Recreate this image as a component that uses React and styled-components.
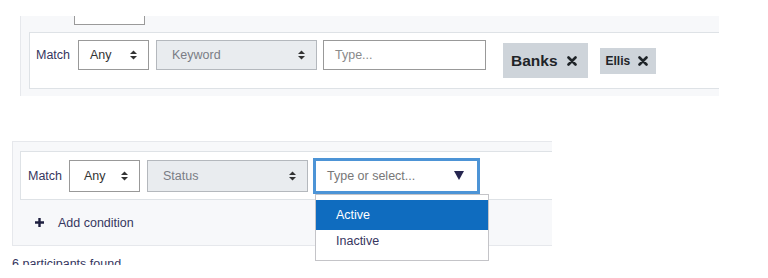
import React from 'react';
import styled, { createGlobalStyle } from 'styled-components';

const GlobalStyle = createGlobalStyle`
    body {
        margin: 0;
        background: #fff;
        font-family: 'Liberation Sans', Arial, sans-serif;
        font-size: 12.5px;
        color: #363660;
    }
`;

const Page = styled.div`
    height: 265px;
    padding-top: 16px;
    box-sizing: border-box;
    overflow: hidden;
`;

const Panel = styled.div`
    margin-left: ${(p) => p.$left}px;
    width: ${(p) => p.$width}px;
    margin-top: ${(p) => p.$top || 0}px;
    padding: ${(p) => p.$padding};
    background: #f7f8fa;
    border-left: 1px solid #e6e8ec;
    border-top: ${(p) => (p.$bordered ? '1px solid #e6e8ec' : 'none')};
    border-bottom: ${(p) => (p.$bordered ? '1px solid #e6e8ec' : 'none')};
    box-sizing: border-box;
    overflow: ${(p) => (p.$clip ? 'hidden' : 'visible')};
`;

const Stub = styled.div`
    margin-left: 45px;
    width: 71px;
    height: 9px;
    background: #fff;
    border: 1px solid #9a9a9a;
    border-top: none;
    box-sizing: border-box;
`;

const ConditionRow = styled.div`
    display: flex;
    align-items: ${(p) => p.$align};
    height: ${(p) => p.$height}px;
    margin-top: ${(p) => p.$top || 0}px;
    padding: ${(p) => p.$padding};
    background: #fff;
    border: 1px solid #dee2e6;
    border-right: none;
    box-sizing: border-box;
    white-space: nowrap;
`;

const Label = styled.span`
    width: ${(p) => p.$width}px;
    line-height: 30px;
    flex-shrink: 0;
`;

const Select = styled.div`
    display: flex;
    align-items: center;
    justify-content: space-between;
    width: ${(p) => p.$width}px;
    height: ${(p) => p.$height}px;
    margin-right: ${(p) => p.$gap}px;
    padding: 0 11px 0 ${(p) => p.$pad}px;
    background: ${(p) => (p.$disabled ? '#e9ecef' : '#fff')};
    color: ${(p) => (p.$disabled ? '#7a7d85' : '#333')};
    border: 1px solid ${(p) => (p.$disabled ? '#b4b8bd' : '#999')};
    box-sizing: border-box;
    flex-shrink: 0;
`;

const TextInput = styled.div`
    display: flex;
    align-items: center;
    width: 163px;
    height: 30px;
    margin-right: 17px;
    padding-left: 11px;
    color: #8a8a8a;
    border: 1px solid #999;
    box-sizing: border-box;
    flex-shrink: 0;
`;

const Tag = styled.span`
    display: inline-flex;
    align-items: center;
    gap: ${(p) => p.$gap}px;
    height: ${(p) => p.$height}px;
    margin-top: ${(p) => p.$top}px;
    margin-right: 12px;
    padding: 0 ${(p) => p.$right}px 0 ${(p) => p.$left}px;
    background: #ced4da;
    color: #1f2428;
    font-weight: bold;
    font-size: ${(p) => p.$size}px;
    box-sizing: border-box;
    flex-shrink: 0;
`;

const Autocomplete = styled.div`
    position: relative;
    flex-shrink: 0;
`;

const FocusBox = styled.div`
    display: flex;
    align-items: center;
    justify-content: space-between;
    width: 167px;
    height: 36px;
    padding: 0 13px 0 11px;
    color: #777;
    background: #fff;
    border: 3px solid #4d94d6;
    box-sizing: border-box;
`;

const Menu = styled.ul`
    position: absolute;
    top: 100%;
    left: 2px;
    width: 174px;
    height: 67px;
    margin: 0;
    padding: 5px 0 0;
    list-style: none;
    background: #fff;
    border: 1px solid #c4c4c8;
    box-sizing: border-box;
    z-index: 2;
`;

const MenuItem = styled.li`
    height: 30px;
    line-height: ${(p) => (p.$active ? 30 : 22)}px;
    padding-left: 20px;
    background: ${(p) => (p.$active ? '#0f6cbf' : 'transparent')};
    color: ${(p) => (p.$active ? '#fff' : '#363660')};
`;

const AddRow = styled.div`
    display: flex;
    align-items: center;
    gap: 14px;
    height: 45px;
    padding-left: 15px;
`;

const Count = styled.div`
    margin-top: 8px;
    padding-left: 12px;
    line-height: 20px;
`;

const SortIcon = () => (
    <svg width="7" height="10" viewBox="0 0 7 10">
        <polygon points="0,4 3.5,0.5 7,4" fill="#333" />
        <polygon points="0,6 3.5,9.5 7,6" fill="#333" />
    </svg>
);

const CaretDown = () => (
    <svg width="10" height="9" viewBox="0 0 10 9">
        <polygon points="0,0 10,0 5,9" fill="#262650" />
    </svg>
);

const CloseIcon = ({ size }) => (
    <svg width={size} height={size} viewBox="0 0 10 10">
        <path d="M1.5 1.5 L8.5 8.5 M8.5 1.5 L1.5 8.5" stroke="#1f2428" strokeWidth="2.6" strokeLinecap="round" />
    </svg>
);

const PlusIcon = () => (
    <svg width="9" height="9" viewBox="0 0 9 9">
        <path d="M4.5 0 V9 M0 4.5 H9" stroke="#1f2040" strokeWidth="2.4" />
    </svg>
);

const App = () => (
    <>
        <GlobalStyle />
        <Page>
            <Panel $left={20} $width={699} $padding="0 0 7px 8px" $clip>
                <Stub />
                <ConditionRow $height={57} $top={7} $align="flex-start" $padding="7px 0 0 6px">
                    <Label $width={42}>Match</Label>
                    <Select $width={71} $height={30} $gap={7} $pad={11}>
                        Any <SortIcon />
                    </Select>
                    <Select $width={161} $height={30} $gap={6} $pad={15} $disabled>
                        Keyword <SortIcon />
                    </Select>
                    <TextInput>Type...</TextInput>
                    <Tag $height={35} $top={3} $size={15.5} $left={8} $right={11} $gap={9}>
                        Banks <CloseIcon size={10} />
                    </Tag>
                    <Tag $height={26} $top={8} $size={12} $left={6} $right={8} $gap={8}>
                        Ellis <CloseIcon size={10} />
                    </Tag>
                </ConditionRow>
            </Panel>

            <Panel $left={12} $width={540} $top={45} $padding="9px 0 0 7px" $bordered>
                <ConditionRow $height={49} $align="center" $padding="0 0 0 7px">
                    <Label $width={41}>Match</Label>
                    <Select $width={71} $height={32} $gap={7} $pad={14}>
                        Any <SortIcon />
                    </Select>
                    <Select $width={161} $height={32} $gap={5} $pad={15} $disabled>
                        Status <SortIcon />
                    </Select>
                    <Autocomplete>
                        <FocusBox>
                            Type or select... <CaretDown />
                        </FocusBox>
                        <Menu>
                            <MenuItem $active>Active</MenuItem>
                            <MenuItem>Inactive</MenuItem>
                        </Menu>
                    </Autocomplete>
                </ConditionRow>
                <AddRow>
                    <PlusIcon />
                    Add condition
                </AddRow>
            </Panel>
            <Count>6 participants found</Count>
        </Page>
    </>
);

export default App;
